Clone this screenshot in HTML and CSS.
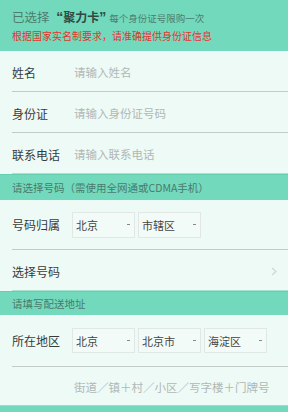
FILE: index.html
```html
<!DOCTYPE html>
<html lang="zh">
<head>
<meta charset="utf-8">
<link rel="stylesheet" href="styles.css">
</head>
<body>
<div class="notice">
  <p class="line1"><span class="lead">已选择</span> <b class="card"><span class="q">“</span>聚力卡<span class="q">”</span></b> <span class="small">每个身份证号限购一次</span></p>
  <p class="line2">根据国家实名制要求，请准确提供身份证信息</p>
</div>

<div class="group">
  <div class="row"><span class="label">姓名</span><span class="ph">请输入姓名</span></div>
  <div class="row"><span class="label">身份证</span><span class="ph">请输入身份证号码</span></div>
  <div class="row last"><span class="label">联系电话</span><span class="ph">请输入联系电话</span></div>
</div>

<div class="section">请选择号码（需使用全网通或CDMA手机）</div>

<div class="group">
  <div class="row tall">
    <span class="label">号码归属</span>
    <div class="selects">
      <div class="sel"><span>北京</span><i class="caret"></i></div>
      <div class="sel"><span>市辖区</span><i class="caret"></i></div>
    </div>
  </div>
  <div class="row last">
    <span class="label">选择号码</span>
    <svg class="chev" width="6" height="9" viewBox="0 0 6 9"><polyline points="1,1 5,4.5 1,8" fill="none" stroke="#cfd6d3" stroke-width="1.2"/></svg>
  </div>
</div>

<div class="section s2">请填写配送地址</div>

<div class="group">
  <div class="row tall2">
    <span class="label">所在地区</span>
    <div class="selects">
      <div class="sel"><span>北京</span><i class="caret"></i></div>
      <div class="sel"><span>北京市</span><i class="caret"></i></div>
      <div class="sel"><span>海淀区</span><i class="caret"></i></div>
    </div>
  </div>
  <div class="row addr last"><span class="label"></span><span class="ph">街道／镇＋村／小区／写字楼＋门牌号</span></div>
</div>

<div class="footer"></div>
</body>
</html>
```

FILE: styles.css
```css
* { box-sizing: border-box; }
html, body { margin: 0; padding: 0; }
body {
  width: 288px;
  height: 412px;
  overflow: hidden;
  background: #eefaf6;
  font-family: "Noto Sans CJK SC", "Noto Sans", sans-serif;
  color: #333;
}
p { margin: 0; }

.notice {
  background: #72d9bc;
  height: 51px;
  padding: 8px 12px 0;
}
.line1 {
  font-size: 12.5px;
  line-height: 18px;
  color: #4e7c6e;
  white-space: nowrap;
}
.line1 .lead { margin-right: 4px; }
.line1 .card {
  color: #2f4a42;
  font-weight: bold;
  font-size: 12px;
}
.line1 .q {
  font-family: "Liberation Sans", sans-serif;
  font-size: 14px;
}
.line1 .small {
  font-size: 9.5px;
  color: #4e7c6e;
}
.line2 {
  margin-top: 1px;
  font-size: 10px;
  line-height: 16px;
  color: #e8322e;
  white-space: nowrap;
}

.group {
  background: #eefaf6;
}
.row {
  display: flex;
  align-items: center;
  margin-left: 12px;
  height: 41px;
  padding-top: 2px;
  border-bottom: 1px solid #c3cbc8;
  font-size: 12px;
}
.row.last {
  border-bottom: 1px solid #a9e0cf;
}
.row.tall { height: 50px; padding-top: 0; }
.row.tall2 { height: 52px; padding-top: 0; }
.row.addr { height: 38px; border-bottom: none; }
.label {
  width: 62px;
  flex: none;
  color: #3a3a3a;
}
.ph {
  color: #b0b8b5;
  font-size: 11.5px;
}
.chev {
  margin-left: auto;
  margin-right: 11px;
}

.section {
  background: #72d9bc;
  border-top: 1px solid #66cfb0;
  height: 26px;
  line-height: 25px;
  padding-left: 12px;
  font-size: 10.5px;
  color: #4a7a6c;
}
.section.s2 { height: 24px; line-height: 23px; }

.selects {
  display: flex;
  gap: 3px;
  margin-left: -2px;
}
.sel {
  width: 63px;
  height: 26px;
  border: 1px solid #e0e7e4;
  background: #f3fbf8;
  display: flex;
  align-items: center;
  justify-content: space-between;
  padding: 0 4px 0 3px;
  font-size: 11px;
  color: #444;
}
.tall2 .sel { height: 25px; }
.caret {
  display: block;
  width: 3px;
  height: 1px;
  background: #888;
}

.footer {
  background: #72d9bc;
  border-top: 1px solid #8fe3cb;
  height: 12px;
}
```
